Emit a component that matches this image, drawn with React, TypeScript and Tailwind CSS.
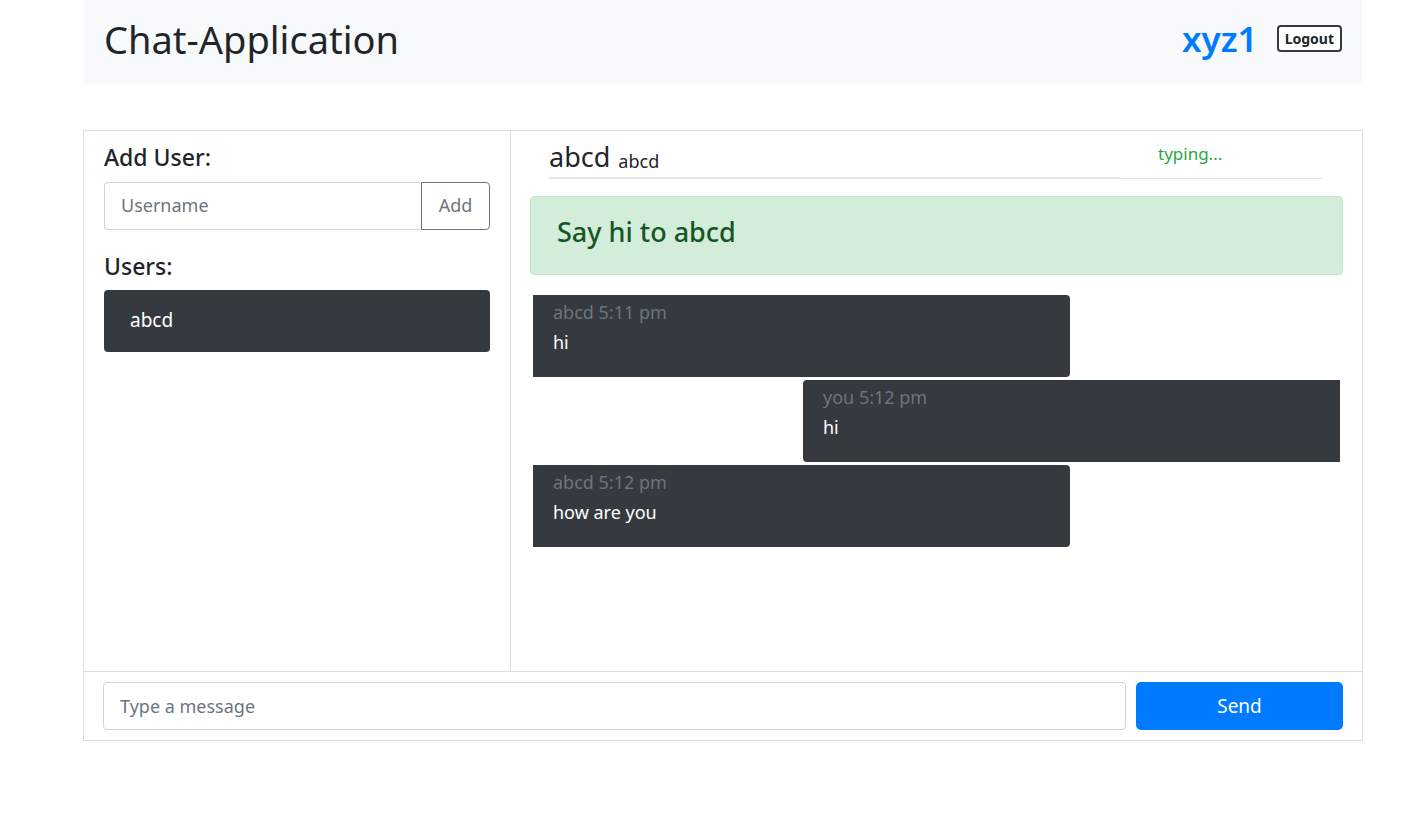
import React from 'react';

const messages = [
  { from: 'abcd', time: '5:11 pm', text: 'hi', mine: false },
  { from: 'you', time: '5:12 pm', text: 'hi', mine: true },
  { from: 'abcd', time: '5:12 pm', text: 'how are you', mine: false },
];

export default function App() {
  return (
    <div className="min-h-screen bg-white text-[#212529]" style={{ fontFamily: '"Noto Sans", "Open Sans", sans-serif' }}>
      {/* Navbar */}
      <div className="ml-[83px] w-[1279px] h-[85px] bg-[#f8f9fa] flex items-center justify-between pl-[21px] pr-[20px] pb-[8px]">
        <h1 className="text-[38px] font-normal leading-none">Chat-Application</h1>
        <div className="flex items-center gap-[19px]">
          <span className="text-[35px] font-semibold text-[#007bff] leading-none">xyz1</span>
          <button className="h-[27px] px-[6px] border-2 border-[#343a40] rounded-[4px] text-[14px] font-bold bg-white leading-none">
            Logout
          </button>
        </div>
      </div>

      {/* Chat box */}
      <div className="ml-[83px] w-[1280px] mt-[45px] border border-[#dedede]">
        <div className="flex h-[540px]">
          {/* Users column */}
          <div className="w-[427px] border-r border-[#dedede] px-[20px] pt-[12px]">
            <h4 className="text-[23px] font-medium leading-tight">Add User:</h4>
            <div className="flex mt-[10px] h-[48px]">
              <input
                placeholder="Username"
                className="flex-1 min-w-0 border border-[#ced4da] border-r-0 rounded-l-[4px] px-[16px] text-[18px] placeholder-[#6c757d] outline-none"
              />
              <button className="w-[69px] border border-[#6c757d] rounded-r-[4px] text-[18px] text-[#6c757d]">Add</button>
            </div>
            <h4 className="text-[23px] font-medium leading-tight mt-[22px]">Users:</h4>
            <div className="mt-[9px] h-[62px] bg-[#343a40] rounded-[4px] text-white text-[19px] flex items-center px-[26px]">
              abcd
            </div>
          </div>

          {/* Conversation column */}
          <div className="flex-1 px-[19px] pt-[8px]">
            <div className="flex mx-[19px] h-[40px]">
              <div className="w-[571px] border-b-2 border-[#e5e5e5] flex items-end pb-[7px]">
                <span className="text-[27px] leading-none">abcd</span>
                <span className="text-[18px] leading-none ml-[8px]">abcd</span>
              </div>
              <div className="w-[202px] border-b border-[#e5e5e5] pl-[38px] pt-[2px]">
                <span className="text-[17px] text-[#28a745]">typing...</span>
              </div>
            </div>
            <div className="mt-[17px] h-[79px] bg-[#d4edda] border border-[#c3e6cb] rounded-[4px] flex items-center px-[26px] pb-[6px]">
              <span className="text-[27px] font-medium text-[#155724]">Say hi to abcd</span>
            </div>
            <div className="mt-[20px] flex flex-col gap-[3px] pl-[3px] pr-[3px]">
              {messages.map((m, i) => (
                <div key={i} className={m.mine ? 'flex justify-end' : 'flex justify-start'}>
                  <div
                    className={
                      'w-[537px] h-[82px] bg-[#343a40] px-[20px] pt-[5px] ' +
                      (m.mine ? 'rounded-l-[4px]' : 'rounded-r-[4px]')
                    }
                  >
                    <div className="text-[18px] text-[#6c757d] leading-[24px]">
                      {m.from} {m.time}
                    </div>
                    <div className="text-[18px] text-white leading-[24px] mt-[6px]">{m.text}</div>
                  </div>
                </div>
              ))}
            </div>
          </div>
        </div>

        {/* Composer */}
        <div className="border-t border-[#dedede] h-[69px] flex items-center gap-[10px] pl-[19px] pr-[19px]">
          <input
            placeholder="Type a message"
            className="flex-1 h-[48px] border border-[#ced4da] rounded-[4px] px-[16px] text-[18px] placeholder-[#6c757d] outline-none"
          />
          <button className="w-[207px] h-[48px] bg-[#007bff] text-white rounded-[5px] text-[19px]">Send</button>
        </div>
      </div>
    </div>
  );
}
